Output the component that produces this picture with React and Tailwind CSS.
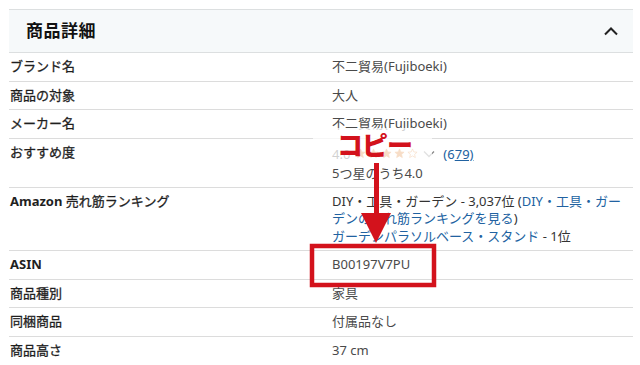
import React from "react";

const rows = [
  { label: "ブランド名", value: "不二貿易(Fujiboeki)" },
  { label: "商品の対象", value: "大人" },
  { label: "メーカー名", value: "不二貿易(Fujiboeki)" },
];

const rows2 = [
  { label: "ASIN", value: "B00197V7PU" },
  { label: "商品種別", value: "家具" },
  { label: "同梱商品", value: "付属品なし" },
  { label: "商品高さ", value: "37 cm" },
];

const Star = ({ filled }) => (
  <svg width="11" height="11" viewBox="0 0 24 24" className="inline-block">
    <path
      d="M12 2l2.9 6.6 7.1.6-5.4 4.7 1.6 7-6.2-3.7-6.2 3.7 1.6-7L2 9.2l7.1-.6z"
      fill={filled ? "#de7921" : "none"}
      stroke="#de7921"
      strokeWidth="1.5"
    />
  </svg>
);

const Row = ({ label, children, last }) => (
  <div className={"flex border-b border-[#dcdcdc] py-[5px] " + (last ? "border-b-0" : "")}>
    <div className="w-[323px] pl-[1px] text-[#1f1f1f] leading-[17.5px] [-webkit-text-stroke:0.3px_#1f1f1f]">{label}</div>
    <div className="flex-1 text-[#4a4a4a] leading-[17.5px]">{children}</div>
  </div>
);

export default function App() {
  return (
    <div
      className="relative w-[640px] h-[365px] bg-white overflow-hidden text-[13px]"
      style={{ fontFamily: '"Noto Sans", "Noto Sans CJK JP", sans-serif' }}
    >
      <div className="ml-[9px] mt-[9px] w-[624px]">
        <div className="flex items-center justify-between h-[44px] border-y border-[#dcdfe0] bg-[#f6f9fa] pl-[17px] pr-[14px]">
          <h2 className="text-[17px] font-bold text-[#111] tracking-[0.5px]">商品詳細</h2>
          <svg width="16" height="9" viewBox="0 0 16 9" className="mt-[1px]">
            <polyline points="2,7.5 8,1.5 14,7.5" fill="none" stroke="#222" strokeWidth="2" />
          </svg>
        </div>

        {rows.map((r) => (
          <Row key={r.label + r.value} label={r.label}>{r.value}</Row>
        ))}

        <div className="flex border-b border-[#dcdcdc] py-[5px]">
          <div className="w-[323px] pl-[1px] text-[#1f1f1f] leading-[17.5px] [-webkit-text-stroke:0.3px_#1f1f1f]">おすすめ度</div>
          <div className="flex-1 text-[#4a4a4a]">
            <div className="flex items-center gap-[2px] h-[20px] leading-[20px]">
              <span className="mr-[3px]">4.0</span>
              <Star filled />
              <Star filled />
              <Star filled />
              <Star filled />
              <Star />
              <svg width="12" height="8" viewBox="0 0 12 8" className="ml-[3px]">
                <polyline points="1,1.5 6,6.5 11,1.5" fill="none" stroke="#888" strokeWidth="1.3" />
              </svg>
              <span className="ml-[6px] text-[#2162a1]">
                (6<span className="underline">79)</span>
              </span>
            </div>
            <div className="leading-[18px]">5つ星のうち4.0</div>
          </div>
        </div>

        <div className="flex border-b border-[#dcdcdc] py-[5px]">
          <div className="w-[323px] pl-[1px] text-[#1f1f1f] leading-[17.5px]">
            <span className="font-bold">Amazon</span>{" "}
            <span className="[-webkit-text-stroke:0.3px_#1f1f1f]">売れ筋ランキング</span>
          </div>
          <div className="flex-1 text-[#333] leading-[17.5px]">
            DIY・工具・ガーデン - 3,037位 (<span className="text-[#2162a1]">DIY・工具・ガー</span>
            <br />
            <span className="text-[#2162a1]">デンの売れ筋ランキングを見る</span>)
            <br />
            <span className="text-[#2162a1]">ガーデンパラソルベース・スタンド</span> - 1位
          </div>
        </div>

        {rows2.map((r, i) => (
          <Row
            key={r.label}
            label={r.label === "ASIN" ? <span className="font-bold [-webkit-text-stroke:0px]">ASIN</span> : r.label}
            last={i === rows2.length - 1}
          >
            {r.value}
          </Row>
        ))}
      </div>

      {/* annotation overlay */}
      <div className="absolute left-[313px] top-[128px] w-[119px] h-[34px] bg-white/75 flex items-center pl-[24px]">
        <span className="text-[26px] font-black text-[#d3121c] leading-none tracking-[-1px]">コピー</span>
      </div>
      <svg className="absolute left-0 top-0 pointer-events-none" width="640" height="365">
        <rect x="374" y="163" width="5" height="54" fill="#d3121c" />
        <polygon points="361,213 391,213 376,243" fill="#d3121c" />
        <rect x="312" y="246" width="122" height="39" fill="none" stroke="#d3121c" strokeWidth="4.5" />
      </svg>
    </div>
  );
}
